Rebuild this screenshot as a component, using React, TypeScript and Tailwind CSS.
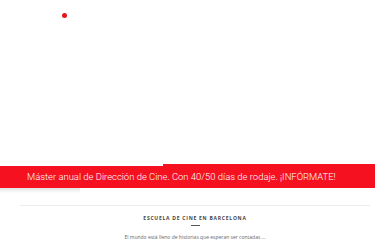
export default function App() {
  return (
    <div className="relative w-[390px] h-[240px] overflow-hidden bg-white font-['Roboto',sans-serif]">
      {/* marcador rojo */}
      <div className="absolute left-[62px] top-[13px] h-[5px] w-[5px] rounded-full bg-[#e8141c]" />

      <div className="pt-[166px]">
        <div className="relative w-[375px]">
          {/* escalón superior de la cinta */}
          <div className="absolute left-[163px] -top-[2px] h-[2px] w-[212px] bg-[#f5111f]" />
          <div className="flex h-[22px] items-center bg-[#f5111f] pl-[27px]">
            <p className="whitespace-nowrap text-[9.45px] font-light leading-none text-white">
              Máster anual de Dirección de Cine. Con 40/50 días de rodaje. ¡INFÓRMATE!
            </p>
          </div>
          <div className="h-[5px] w-[80px] bg-gradient-to-b from-[#cfcfcf] to-transparent opacity-60" />
        </div>

        <div className="mx-[20px] mt-[12px] h-px bg-[#ececec]" />

        <div className="flex flex-col items-center pt-[10px]">
          <h2 className="text-[5px] font-bold uppercase leading-none tracking-[0.75px] text-[#444] font-['Open_Sans',sans-serif]">
            Escuela de cine en Barcelona
          </h2>
          <div className="mt-[4px] h-px w-[9px] bg-[#555]" />
          <p className="mt-[9px] text-[5px] leading-none text-[#666] font-['Open_Sans',sans-serif]">
            El mundo está lleno de historias que esperan ser contadas ...
          </p>
        </div>
      </div>
    </div>
  )
}
